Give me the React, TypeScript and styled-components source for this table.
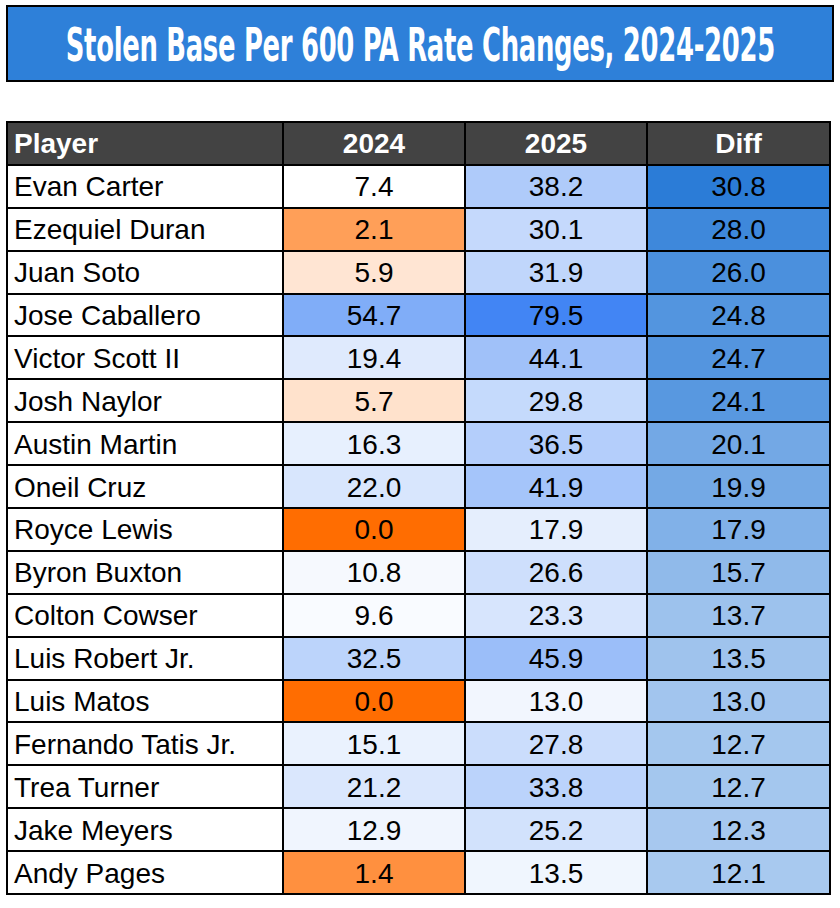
import styled, { createGlobalStyle } from 'styled-components';

const GlobalStyle = createGlobalStyle`
  body {
    margin: 0;
    background: #ffffff;
    font-family: 'Liberation Sans', Arial, sans-serif;
  }
`;

const Page = styled.div`
  width: 840px;
  padding: 5px 0 0 6px;
  box-sizing: border-box;
`;

const TitleBox = styled.div`
  width: 828px;
  height: 77px;
  box-sizing: border-box;
  border: 2px solid #000000;
  background: #2e80d9;
  display: flex;
  align-items: center;
  justify-content: center;
  overflow: hidden;
`;

const TitleText = styled.span`
  font-family: 'DejaVu Sans Condensed', 'DejaVu Sans', sans-serif;
  font-weight: bold;
  font-size: 47px;
  color: #ffffff;
  white-space: nowrap;
  display: inline-block;
  transform: scaleX(0.612);
  letter-spacing: -0.5px;
  margin-top: 2px;
`;

const Table = styled.table`
  margin-top: 39px;
  width: 823px;
  border-collapse: collapse;
  table-layout: fixed;
  border: 2px solid #000000;
`;

const TableRow = styled.tr`
  height: 42.9px;
`;

const HeadCell = styled.th<{ $align?: 'left' | 'center' }>`
  background: #434343;
  color: #ffffff;
  font-weight: bold;
  font-size: 28px;
  line-height: 30px;
  padding: 1px 6px 0;
  border: 2px solid #000000;
  text-align: ${({ $align }) => $align || 'center'};
  vertical-align: middle;
`;

const Cell = styled.td<{ $bg?: string; $align?: 'left' | 'center' }>`
  background: ${({ $bg }) => $bg || '#ffffff'};
  color: #000000;
  font-size: 28px;
  line-height: 30px;
  padding: 2px 6px 0;
  border: 2px solid #000000;
  text-align: ${({ $align }) => $align || 'center'};
  vertical-align: middle;
  white-space: nowrap;
  overflow: hidden;
`;

type Row = [string, number, number, number];

const rows: Row[] = [
  ['Evan Carter', 7.4, 38.2, 30.8],
  ['Ezequiel Duran', 2.1, 30.1, 28.0],
  ['Juan Soto', 5.9, 31.9, 26.0],
  ['Jose Caballero', 54.7, 79.5, 24.8],
  ['Victor Scott II', 19.4, 44.1, 24.7],
  ['Josh Naylor', 5.7, 29.8, 24.1],
  ['Austin Martin', 16.3, 36.5, 20.1],
  ['Oneil Cruz', 22.0, 41.9, 19.9],
  ['Royce Lewis', 0.0, 17.9, 17.9],
  ['Byron Buxton', 10.8, 26.6, 15.7],
  ['Colton Cowser', 9.6, 23.3, 13.7],
  ['Luis Robert Jr.', 32.5, 45.9, 13.5],
  ['Luis Matos', 0.0, 13.0, 13.0],
  ['Fernando Tatis Jr.', 15.1, 27.8, 12.7],
  ['Trea Turner', 21.2, 33.8, 12.7],
  ['Jake Meyers', 12.9, 25.2, 12.3],
  ['Andy Pages', 1.4, 13.5, 12.1],
];

type RGB = [number, number, number];

function mix(a: RGB, b: RGB, t: number) {
  const k = Math.max(0, Math.min(1, t));
  const c = a.map((v, i) => Math.round(v + (b[i] - v) * k));
  return `rgb(${c[0]}, ${c[1]}, ${c[2]})`;
}

const WHITE: RGB = [255, 255, 255];
const ORANGE: RGB = [255, 109, 1];
const BLUE: RGB = [66, 133, 244];

// 2024: orange at 0, white at 7.4, blue towards the top
function color2024(v: number) {
  if (v <= 7.4) return mix(ORANGE, WHITE, Math.pow(v / 7.4, 0.85));
  return mix(WHITE, BLUE, (v - 7.4) / (78 - 7.4));
}

function color2025(v: number) {
  return mix(WHITE, BLUE, (v - 8) / (79.5 - 8));
}

function colorDiff(v: number) {
  return mix([168, 201, 239], [43, 124, 215], (v - 12.1) / (30.8 - 12.1));
}

export default function App() {
  return (
    <Page>
      <GlobalStyle />
      <TitleBox>
        <TitleText>Stolen Base Per 600 PA Rate Changes, 2024-2025</TitleText>
      </TitleBox>
      <Table>
        <colgroup>
          <col style={{ width: 276 }} />
          <col style={{ width: 182 }} />
          <col style={{ width: 182 }} />
          <col style={{ width: 183 }} />
        </colgroup>
        <thead>
          <TableRow>
            <HeadCell $align="left">Player</HeadCell>
            <HeadCell>2024</HeadCell>
            <HeadCell>2025</HeadCell>
            <HeadCell>Diff</HeadCell>
          </TableRow>
        </thead>
        <tbody>
          {rows.map(([name, a, b, d]) => (
            <TableRow key={name}>
              <Cell $align="left">{name}</Cell>
              <Cell $bg={color2024(a)}>{a.toFixed(1)}</Cell>
              <Cell $bg={color2025(b)}>{b.toFixed(1)}</Cell>
              <Cell $bg={colorDiff(d)}>{d.toFixed(1)}</Cell>
            </TableRow>
          ))}
        </tbody>
      </Table>
    </Page>
  );
}
